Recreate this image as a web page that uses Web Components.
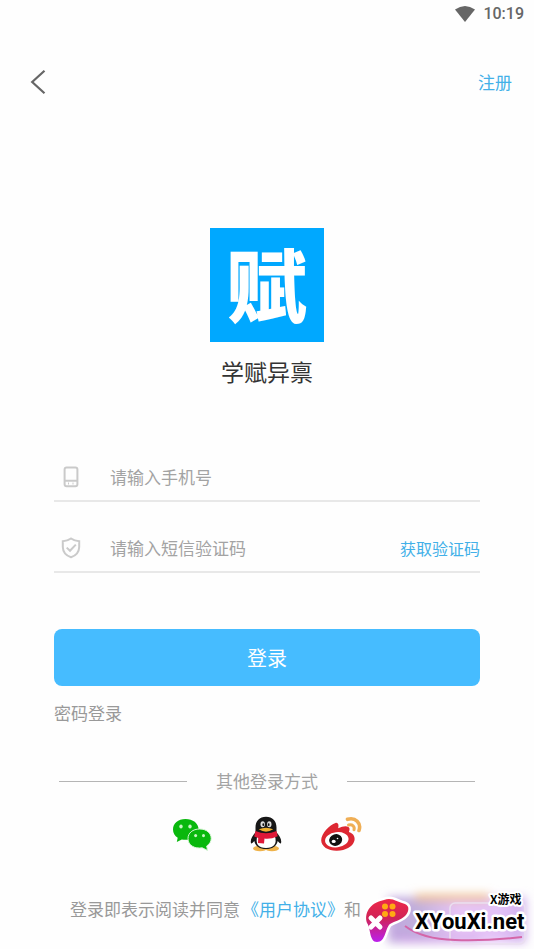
<!DOCTYPE html>
<html lang="zh-CN">
<head>
<meta charset="utf-8">
<meta name="viewport" content="width=device-width, initial-scale=1">
<title>学赋异禀</title>
<style>
body{margin:0;background:#fefefe;font-family:"Noto Sans CJK SC",sans-serif;font-size:17px;line-height:24px;color:#999}
</style>
</head>
<body>
<login-page></login-page>
<script>
const define = (name, html, setup) => {
  const template = document.createElement('template');
  template.innerHTML = html;
  customElements.define(name, class extends HTMLElement {
    constructor() {
      super();
      this.attachShadow({ mode: 'open' }).append(template.content.cloneNode(true));
    }
    connectedCallback() { if (setup) setup(this, this.shadowRoot); }
  });
};

define('status-bar', `
<style>
:host{display:flex;justify-content:flex-end;align-items:center;gap:8px;height:28px;padding-right:10px;color:#666;font:500 16px/28px Roboto,sans-serif}
svg{display:block}
</style>
<svg width="20" height="16" viewBox="0 0 20 16" aria-hidden="true"><path d="M0 3.6Q10-3.4 20 3.6L10 16Z" fill="#666"/></svg>
<span>10:19</span>`);

define('nav-bar', `
<style>
:host{display:flex;justify-content:space-between;align-items:center;height:44px;padding:32px 22px 0 30px}
button{display:block;border:0;background:none;padding:0;cursor:pointer}
svg{display:block}
a{color:#42b0e8;text-decoration:none}
</style>
<button type="button" aria-label="返回"><svg width="16" height="24" viewBox="0 0 16 24" fill="none" stroke="#666" stroke-width="2.2"><path d="M14.5 .8 2.2 12 14.5 23.2"/></svg></button>
<a href="#register">注册</a>`);

define('app-brand', `
<style>
:host{display:flex;flex-direction:column;align-items:center;gap:13px;padding-top:124px}
div{display:flex;justify-content:center;width:114px;height:114px;background:#00a8ff;color:#fff;font-size:80px;line-height:106px;font-weight:900}
h1{margin:0;font-size:23px;line-height:32px;font-weight:400;color:#333}
</style>
<div aria-hidden="true">赋</div>
<h1><slot></slot></h1>`);

define('icon-field', `
<style>
:host{display:flex;align-items:center;height:47px;border-bottom:2px solid #e8e8e8}
label{display:flex;flex:none;width:34px;justify-content:center}
input{flex:1;min-width:0;margin-left:22px;padding:0;border:0;outline:0;background:none;font:inherit;height:32px;color:#333}
input::placeholder{color:#a3a3a3;opacity:1}
svg{display:block}
</style>
<label for="field"></label>
<input id="field">
<slot></slot>`, (host, root) => {
  const icons = {
    phone: '<rect x="4.6" y="1.400" width="12.800" height="18.800" rx="2"/><path d="M5 14.800h12M8 17.600h1M12.500 17.600h1"/>',
    shield: '<path d="M11 1.5Q14.5 4 19.2 4.3V10Q19 17.5 11 20.3Q3 17.5 2.8 10V4.3Q7.5 4 11 1.5Z"/><path d="m6.7 10.6 3.3 3.2 5.8-6.2"/>'
  };
  root.querySelector('label').innerHTML = '<svg width="22" height="22" viewBox="0 0 22 22" fill="none" stroke="#cacaca" stroke-width="2" aria-hidden="true">' + icons[host.getAttribute('icon')] + '</svg>';
  root.querySelector('label').setAttribute('aria-label', host.getAttribute('hint'));
  const input = root.querySelector('input');
  input.placeholder = host.getAttribute('hint');
  input.inputMode = 'numeric';
});

define('login-form', `
<style>
:host{display:block;padding:66px 54px 0}
form{display:flex;flex-direction:column}
icon-field + icon-field{margin-top:22px}
button{border:0;font-family:inherit;cursor:pointer;padding:0}
.code{background:none;color:#42b0e8;font-size:16px;line-height:24px}
.submit{margin-top:56px;height:57px;border-radius:8px;background:#46bcff;color:#fff;font-size:20px}
a{align-self:flex-start;margin-top:15px;color:#999;text-decoration:none}
</style>
<form>
<icon-field icon="phone" hint="请输入手机号"></icon-field>
<icon-field icon="shield" hint="请输入短信验证码"><button class="code" type="button">获取验证码</button></icon-field>
<button class="submit" type="button">登录</button>
<a href="#password">密码登录</a>
</form>`);

define('line-heading', `
<style>
:host{display:flex;align-items:center;gap:29px;padding:0 59px;margin-top:44px;color:#a3a3a3}
:host::before,:host::after{content:"";flex:1;height:1px;background:#b5b5b5}
</style><slot></slot>`);

define('social-logins', `
<style>
:host{display:flex;justify-content:center;gap:37px;margin-top:23px}
button{display:block;padding:0;border:0;background:none;cursor:pointer}
svg{display:block}
</style>
<button type="button" aria-label="微信登录"><svg width="40" height="36" viewBox="0 0 40 36">
<path d="M13.5 3C6 3 1 7.4 1 13.4c0 3.7 1.8 6.5 4.7 8.4L4.8 26l5-2.6c8.8 1.8 16.8-2.7 16.8-10C26.6 7.2 20.8 3 13.5 3Z" fill="#09b80d"/>
<ellipse cx="9" cy="10.5" rx="1.7" ry="2" fill="#c8f5c4"/><ellipse cx="18" cy="10.5" rx="1.7" ry="2" fill="#c8f5c4"/>
<path d="M27.7 13C20.7 13 16 17 16 22.5c0 6.5 6.2 10.6 14.2 9.3l5.3 2.6-.8-4.4c2.7-1.8 4.5-4.3 4.5-7.5 0-5.5-4.8-9.5-11.5-9.5Z" fill="#09b80d" stroke="#d8f5d6" stroke-width="1"/>
<ellipse cx="23.6" cy="19.6" rx="1.5" ry="1.7" fill="#c8f5c4"/><ellipse cx="31.5" cy="19.6" rx="1.5" ry="1.7" fill="#c8f5c4"/></svg></button>
<button type="button" aria-label="QQ登录"><svg width="34" height="36" viewBox="0 0 34 36">
<ellipse cx="11" cy="32.5" rx="7" ry="2.8" fill="#efb34b"/><ellipse cx="23" cy="32.5" rx="7" ry="2.8" fill="#efb34b"/>
<path d="M17 .8C10.500.8 6.500 5 6.500 11.500v4.700C3.500 19.600 1.500 23 1.800 26.200c.2 2.200 1.400 1.300 3.500-1.200C6.500 30.500 10.800 33 17 33s10.500-2.500 11.700-8c2.100 2.500 3.300 3.400 3.500 1.200.3-3.200-1.700-6.600-4.700-10v-4.700C27.500 5 23.500.8 17 .8Z" fill="#171717"/>
<path d="M8.500 19.500h17.200c3 8.500-1.200 12.500-8.700 12.500s-11.200-4-8.500-12.500Z" fill="#fff"/>
<ellipse cx="13.700" cy="8.300" rx="2.200" ry="3" fill="#ddd"/><ellipse cx="20.300" cy="8.300" rx="2.200" ry="3" fill="#ddd"/>
<ellipse cx="14.300" cy="8.700" rx=".9" ry="1.400" fill="#111"/><ellipse cx="19.700" cy="8.700" rx=".9" ry="1.400" fill="#111"/>
<path d="M9.800 13.300Q17 10.200 24.200 13.300 17 18 9.800 13.300Z" fill="#efb12f"/>
<path d="M6.500 15Q17 19.500 27.500 15l1.200 5.200Q21.500 23.500 15.500 22.600L15 27.500l-6-.5.200-5-4-1.500Z" fill="#df1838"/></svg></button>
<button type="button" aria-label="微博登录"><svg width="42" height="36" viewBox="0 0 42 36">
<path d="M15.500 7c2.500-.7 3.600 1.600 2.700 5.300 5.200-2.800 10.500-3 11.300.2.200 1-.2 2.300-.6 3.500 10.500 3.200 6.800 18.200-12 18.800C8.500 35 1.200 30.800 1.200 24.300 1.200 17.500 9.600 8.600 15.500 7Z" fill="#dd2732"/>
<ellipse cx="16.800" cy="23.800" rx="11.800" ry="7.600" fill="#fff" transform="rotate(-7 16.800 23.800)"/>
<ellipse cx="15.700" cy="24" rx="6.600" ry="5.800" fill="#111" transform="rotate(-18 15.700 24)"/>
<ellipse cx="13.700" cy="25.400" rx="2" ry="1.600" fill="#fff"/><circle cx="17.500" cy="22.500" r=".8" fill="#fff"/>
<path d="M27.500 3.300C35.500 1 41.500 7 39 14.500" fill="none" stroke="#efae55" stroke-width="3.600" stroke-linecap="round"/>
<path d="M28.500 9C32.500 8 35 10.500 34 13.800" fill="none" stroke="#efae55" stroke-width="3" stroke-linecap="round"/></svg></button>`);

define('agreement-note', `
<style>
:host{display:block;padding:45px 70px 27px;white-space:nowrap}
a{margin-left:2px;color:#42b0e8;text-decoration:none}
</style>登录即表示阅读并同意<a href="#terms">《用户协议》</a>和`);

define('site-badge', `
<style>
:host{position:absolute;right:0;bottom:0;width:174px;height:66px;overflow:hidden;color:#000}
svg{display:block}
text{font-family:"Noto Sans CJK SC",sans-serif;font-weight:700;paint-order:stroke;stroke:#fff;stroke-linejoin:round}
.site{font-family:Roboto,sans-serif}
</style>
<svg width="174" height="66" viewBox="0 0 174 66">
<defs>
<linearGradient id="body" x2="0" y2="1"><stop stop-color="#ee2947"/><stop offset=".45" stop-color="#cf2358"/><stop offset="1" stop-color="#bb20ed"/></linearGradient>
<linearGradient id="haze"><stop stop-color="#c3a6e0"/><stop offset=".22" stop-color="#c0b0dc"/><stop offset=".5" stop-color="#e6c4f5"/><stop offset=".8" stop-color="#e3c2f7"/><stop offset="1" stop-color="#cfb0ec"/></linearGradient>
<filter id="soft" x="-20%" y="-40%" width="140%" height="180%"><feGaussianBlur stdDeviation="5"/></filter>
</defs>
<g filter="url(#soft)"><rect x="28" y="14" width="138" height="46" fill="url(#haze)"/><path d="M55 11h75v7H55Z" fill="#efc090"/><path d="M40 54h80v5H40Z" fill="#cf9ee8"/></g>
<rect x="90" y="20" width="75" height="41" rx="5" fill="none" stroke="#eadff0" stroke-width="1.500"/>
<path d="M45 43Q62 56 95 57T162 54" fill="none" stroke="#d466a8" stroke-width="2"/>
<path d="M24 17C32 14 37 19 45 21c5 2 4 8 0 12-4 4-10 5-15 8-5 4-4 18-13 18C9 59 11 45 7 40 4 31 9 20 24 17Z" fill="#fff" stroke="#fff" stroke-width="5" stroke-linejoin="round"/>
<path d="M24 17C32 14 37 19 45 21c5 2 4 8 0 12-4 4-10 5-15 8-5 4-4 18-13 18C9 59 11 45 7 40 4 31 9 20 24 17Z" fill="url(#body)"/>
<g fill="#ffaa13"><circle cx="25" cy="23.500" r="3"/><circle cx="32.500" cy="23.500" r="3"/><circle cx="25" cy="31" r="3"/><circle cx="32.500" cy="31" r="3"/></g>
<path d="m11 35 9 9m0-9-9 9" stroke="#fff" stroke-width="5" stroke-linecap="round"/>
<text class="site" x="55" y="46" font-size="22" stroke-width="5">XYouXi.net</text>
<text x="130" y="21" font-size="12" stroke-width="4">X游戏</text>
</svg>`);

define('login-page', `
<style>:host{display:block;position:relative;min-height:100vh;overflow:hidden}</style>
<status-bar></status-bar>
<nav-bar></nav-bar>
<app-brand>学赋异禀</app-brand>
<main>
<login-form></login-form>
<line-heading>其他登录方式</line-heading>
<social-logins></social-logins>
<agreement-note></agreement-note>
</main>
<site-badge></site-badge>`);
</script>
</body>
</html>
